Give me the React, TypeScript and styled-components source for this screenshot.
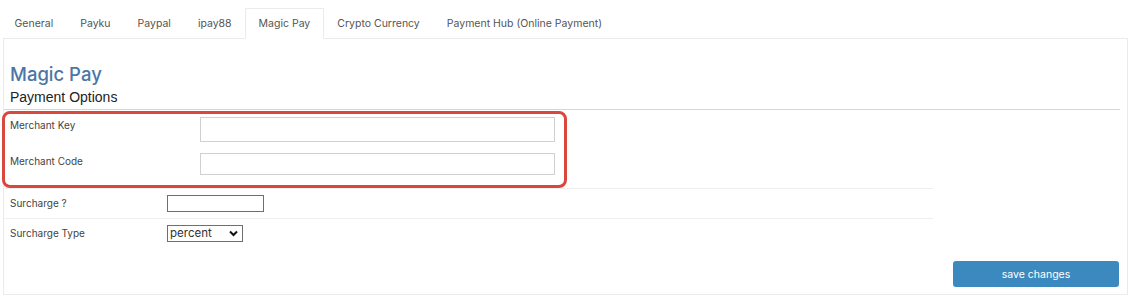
import styled, { createGlobalStyle } from 'styled-components'

const GlobalStyle = createGlobalStyle`
  body {
    margin: 0;
    background: #fff;
    font-family: Inter, 'Open Sans', sans-serif;
    color: #333;
  }
`

const Page = styled.div`
  width: 1135px;
  height: 303px;
  padding-top: 8px;
  box-sizing: border-box;
`

const TabBar = styled.div`
  display: flex;
  margin-left: 1px;
  height: 31px;
  position: relative;
  z-index: 1;
`

const Tab = styled.div<{ $active?: boolean }>`
  display: flex;
  align-items: center;
  padding: 0 12.5px;
  font-size: 10.5px;
  color: #555;
  border: 1px solid ${(p) => (p.$active ? '#ebebeb' : 'transparent')};
  border-bottom-color: ${(p) => (p.$active ? '#fff' : 'transparent')};
  background: ${(p) => (p.$active ? '#fff' : 'transparent')};
`

const Panel = styled.div`
  margin: -1px 7px 0 3px;
  height: 257px;
  box-sizing: border-box;
  border: 1px solid #ebebeb;
  padding-right: 7px;
  display: flex;
  flex-direction: column;
`

const Heading = styled.h2`
  margin: 23px 0 0 6px;
  font-size: 18.5px;
  font-weight: 500;
  line-height: 24px;
  color: #4b76a5;
`

const SubHeading = styled.h3`
  margin: 2px 0 0 6px;
  font-family: 'Liberation Sans', Arial, sans-serif;
  font-size: 14px;
  font-weight: normal;
  line-height: 18px;
  color: #222;
`

const Rule = styled.div`
  margin-top: 3px;
  border-top: 1px solid #d6d6d6;
`

const Highlight = styled.div`
  margin: 1px 0 0 -2px;
  width: 565px;
  height: 77px;
  box-sizing: border-box;
  border: 3px solid #d9483e;
  border-radius: 8px;
  padding: 3px 0 0 5px;
  display: flex;
  flex-direction: column;
  gap: 11px;
`

const KeyRow = styled.div`
  display: flex;
  align-items: flex-start;
`

const Label = styled.div<{ $width: number }>`
  width: ${(p) => p.$width}px;
  flex-shrink: 0;
  padding-top: 1px;
  font-size: 10px;
  line-height: 14px;
  color: #444;
`

const WideInput = styled.input<{ $h: number }>`
  width: 355px;
  height: ${(p) => p.$h}px;
  box-sizing: border-box;
  border: 1px solid #d0d0d0;
  background: #fff;
  margin: 0;
  padding: 0;
`

const Table = styled.div`
  width: 929px;
`

const Row = styled.div`
  display: flex;
  align-items: flex-start;
  height: 30px;
  box-sizing: border-box;
  border-top: 1px solid #efefef;
  padding: 6px 0 0 6px;
`

const SmallInput = styled.input`
  display: block;
  width: 97px;
  height: 17px;
  margin: 0;
  box-sizing: border-box;
  border: 1px solid #6f6f6f;
  padding: 0;
`

const SelectBox = styled.div`
  position: relative;
  width: 76px;
  height: 17px;
`

const Select = styled.select`
  display: block;
  appearance: none;
  width: 100%;
  height: 100%;
  box-sizing: border-box;
  border: 1px solid #6f6f6f;
  border-radius: 0;
  background: #fff;
  margin: 0;
  padding: 0 0 0 2px;
  font-family: Inter, 'Open Sans', sans-serif;
  font-size: 11.5px;
  line-height: 15px;
  color: #333;
`

const Chevron = styled.svg`
  position: absolute;
  right: 5px;
  top: 5px;
  pointer-events: none;
`

const Footer = styled.div`
  margin-top: auto;
  margin-bottom: 7px;
  display: flex;
  justify-content: flex-end;
  padding-right: 1px;
`

const SaveButton = styled.button`
  width: 166px;
  height: 26px;
  border: none;
  border-radius: 3px;
  background: #3b89be;
  color: #fff;
  font-family: Inter, 'Open Sans', sans-serif;
  font-size: 10.5px;
  cursor: pointer;
`

const tabs = ['General', 'Payku', 'Paypal', 'ipay88', 'Magic Pay', 'Crypto Currency', 'Payment Hub (Online Payment)']

export default function App() {
  return (
    <Page>
      <GlobalStyle />
      <TabBar>
        {tabs.map((t) => (
          <Tab key={t} $active={t === 'Magic Pay'}>
            {t}
          </Tab>
        ))}
      </TabBar>
      <Panel>
        <Heading>Magic Pay</Heading>
        <SubHeading>Payment Options</SubHeading>
        <Rule />
        <Highlight>
          <KeyRow>
            <Label $width={190}>Merchant Key</Label>
            <WideInput $h={25} />
          </KeyRow>
          <KeyRow>
            <Label $width={190}>Merchant Code</Label>
            <WideInput $h={22} />
          </KeyRow>
        </Highlight>
        <Table>
          <Row>
            <Label $width={157}>Surcharge ?</Label>
            <SmallInput />
          </Row>
          <Row>
            <Label $width={157}>Surcharge Type</Label>
            <SelectBox>
              <Select defaultValue="percent">
                <option value="percent">percent</option>
                <option value="fixed">fixed</option>
              </Select>
              <Chevron width="9" height="7" viewBox="0 0 9 7">
                <path d="M1 1.5 L4.5 5 L8 1.5" fill="none" stroke="#111" strokeWidth="2" />
              </Chevron>
            </SelectBox>
          </Row>
        </Table>
        <Footer>
          <SaveButton>save changes</SaveButton>
        </Footer>
      </Panel>
    </Page>
  )
}
